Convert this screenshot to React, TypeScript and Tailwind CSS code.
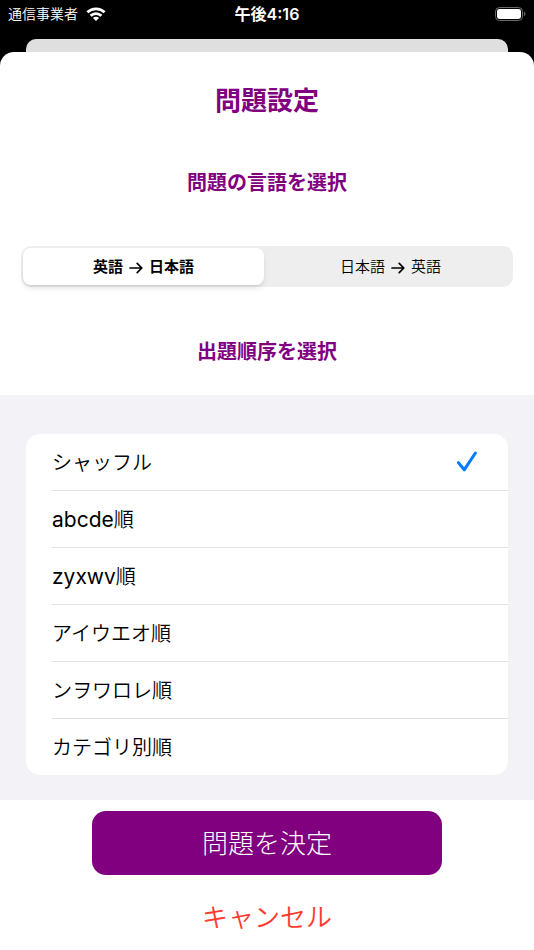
import { useState } from "react";

const directions = [
  { from: "英語", to: "日本語" },
  { from: "日本語", to: "英語" },
];

const orders = [
  { latin: "", name: "シャッフル" },
  { latin: "abcde", name: "順" },
  { latin: "zyxwv", name: "順" },
  { latin: "", name: "アイウエオ順" },
  { latin: "", name: "ンヲワロレ順" },
  { latin: "", name: "カテゴリ別順" },
];

function StatusBar() {
  return (
    <div className="grid grid-cols-3 items-center h-7 px-2 text-white">
      <div className="flex items-center gap-2">
        <span className="text-sm font-[350] whitespace-nowrap">通信事業者</span>
        <svg width="20" height="14" viewBox="0 0 20 14" fill="none" stroke="currentColor" strokeWidth="2.8">
          <path d="M1.4 5.3a12.4 12.4 0 0 1 17.2 0" />
          <path d="M4.6 8.7a7.8 7.8 0 0 1 10.8 0" />
          <path d="M10 14 6.9 11a4.4 4.4 0 0 1 6.2 0Z" fill="currentColor" stroke="none" />
        </svg>
      </div>
      <span className="text-center text-base font-semibold">午後4:16</span>
      <svg className="justify-self-end" width="31" height="14" viewBox="0 0 31 14">
        <rect x="0.5" y="0.5" width="27" height="13" rx="4" fill="none" stroke="#6b6b6b" />
        <rect x="2" y="2" width="24" height="10" rx="2.4" fill="#fff" />
        <path d="M29 4.8c.9.4 1.4 1.2 1.4 2.2s-.5 1.8-1.4 2.2Z" fill="#6b6b6b" />
      </svg>
    </div>
  );
}

function Arrow() {
  return (
    <svg width="14" height="12" viewBox="0 0 14 12" fill="none" stroke="currentColor" strokeWidth="1.7" strokeLinecap="round" strokeLinejoin="round">
      <path d="M1 6h11.8M8.2 1.4 12.8 6l-4.6 4.6" />
    </svg>
  );
}

export default function App() {
  const [direction, setDirection] = useState(0);
  const [order, setOrder] = useState(0);

  return (
    <div className="min-h-screen flex flex-col bg-black font-['Inter','Noto_Sans_CJK_JP',sans-serif]">
      <StatusBar />
      <div className="mx-[26px] mt-[11px] h-[13px] rounded-t-[10px] bg-[#dfdfdf]" />

      <main className="grow flex flex-col bg-white rounded-t-[14px] text-black">
        <h1 className="mt-[33px] text-center text-[26px] leading-8 font-bold text-[#800080]">問題設定</h1>
        <h2 className="mt-[52px] text-center text-xl leading-7 font-bold text-[#800080]">問題の言語を選択</h2>

        {/* Segmented control */}
        <div className="mt-[49px] mx-[21px] h-[41px] grid grid-cols-2 gap-1.5 p-0.5 rounded-[10px] bg-[#eeeeee]">
          {directions.map((item, index) => (
            <button
              key={item.from}
              type="button"
              aria-pressed={direction === index}
              onClick={() => setDirection(index)}
              className={
                direction === index
                  ? "flex items-center justify-center gap-1.5 rounded-lg bg-white pt-0.5 text-[15px] font-bold shadow-md"
                  : "flex items-center justify-center gap-1.5 rounded-lg pt-0.5 text-[15px] font-[350]"
              }
            >
              {item.from}
              <Arrow />
              {item.to}
            </button>
          ))}
        </div>

        <h2 className="mt-[51px] text-center text-xl leading-7 font-bold text-[#800080]">出題順序を選択</h2>

        <section className="mt-[29px] px-[26px] pt-[39px] pb-[25px] bg-[#f2f2f7]">
          <ul className="rounded-[14px] bg-white pl-[26px]">
            {orders.map(({ latin, name }, index) => (
              <li key={latin + name} className="border-b border-[#e3e3e5] last:border-b-0">
                <button
                  type="button"
                  aria-pressed={order === index}
                  onClick={() => setOrder(index)}
                  className="w-full h-14 pr-[30px] flex items-center justify-between text-xl font-[350]"
                >
                  <span className="pt-px">
                    {latin && <span className="text-[21px] font-normal">{latin}</span>}
                    {name}
                  </span>
                  {order === index && (
                    <svg width="22" height="22" viewBox="0 0 22 22" fill="none" stroke="#007aff" strokeWidth="3" strokeLinecap="round" strokeLinejoin="round">
                      <path d="m2.4 11.6 5.8 7.2L19.4 2" />
                    </svg>
                  )}
                </button>
              </li>
            ))}
          </ul>
        </section>

        <div className="flex flex-col items-center px-[92px] pt-[11px]">
          <button type="button" className="w-full h-16 rounded-[14px] bg-[#800080] text-[26px] font-light text-white">
            問題を決定
          </button>
          <button type="button" className="mt-[25px] text-[26px] leading-9 font-[350] text-[#ff3b30]">
            キャンセル
          </button>
        </div>
      </main>
    </div>
  );
}
